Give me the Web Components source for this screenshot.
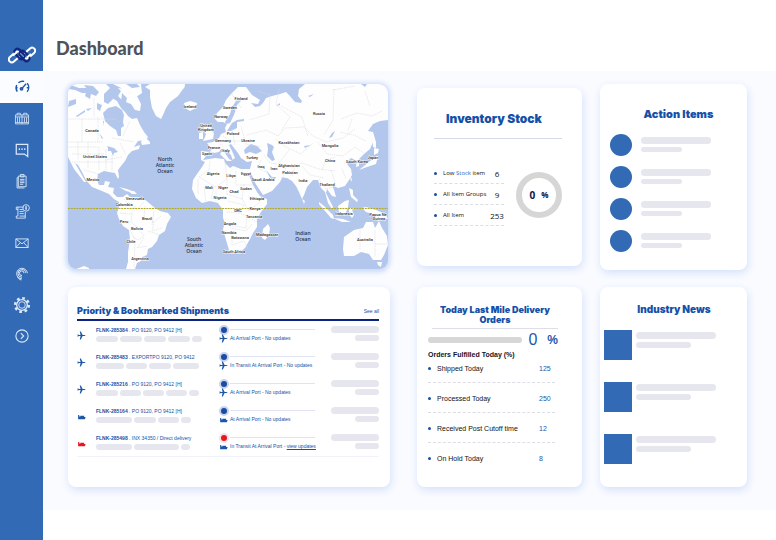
<!DOCTYPE html>
<html lang="en">
<head>
<meta charset="utf-8">
<title>Dashboard</title>
<style>
  body { margin: 0; font-family: "Liberation Sans", Arial, sans-serif; --blue: #1450a8; --brand: #326ab5; --soft: #e6e6ee; background: #fff; }
</style>
</head>
<body>
<dash-app></dash-app>
<script>
const define = (name, html) => {
  customElements.define(name, class extends HTMLElement {
    connectedCallback() {
      if (this.shadowRoot) return;
      const t = document.createElement('template');
      t.innerHTML = typeof html === 'function' ? html(this) : html;
      this.attachShadow({ mode: 'open' }).appendChild(t.content.cloneNode(true));
    }
  });
};

const icons = {
  gauge: '<path d="M5.2 16.6A8 8 0 0 1 4.5 8.6M6.6 5.8A8 8 0 0 1 13.6 4.2M17.4 6.4A8 8 0 0 1 17.2 16.8M10.2 13.6L16 7M3.6 12h2M16.8 12h2" /><circle cx="10.4" cy="13.2" r="1.5"/>',
  container: '<path d="M3 6h16v11H3zM3 8.500h16M3 15.500h16M5.500 9v6.500M8 9v6.500M11 6v11M14 9v6.500M16.500 9v6.500M5 6V4h4v2M13 6V4h4v2" stroke-width="1"/>',
  chat: '<path d="M4 4h14v15l-4-3H4z" stroke-width="1.500"/><path d="M7 10h1.500M10.300 10h1.500M13.600 10h1.500" stroke-width="2"/>',
  clipboard: '<path d="M6.500 5h9.500v13H6.500zM9 3h4.500v3H9zM8.500 9h5.500M8.500 11h5.500M8.500 13h5.500M8.500 15h4M6.500 7H5v12.500h9"/>',
  invoice: '<path d="M6 5h7M6 5v11H4v2.500h11V16H8M15 11v5M8 8h4M8 10.500h5M8 13h5M6 5H4v3h2"/><circle cx="16" cy="6" r="4"/><path d="M16 3.500v5M15 5h2M15 7h2"/>',
  mail: '<path d="M3.500 6h15v10.500h-15zM3.500 6l7.500 6 7.500-6M3.500 16.500l5.500-6M18.500 16.500L13 10.500"/>',
  finger: '<path d="M17.500 10A6.500 6.500 0 1 0 11 17M15.500 9.500A4.700 4.700 0 1 0 11 15M13.500 10A2.800 2.800 0 1 0 11 12.800M5.500 14.500Q7 17.500 10 18.500" stroke-width="1.200"/>',
  gear: '<circle cx="11" cy="11" r="6.500" stroke-width="1.600"/><circle cx="11" cy="11" r="4" stroke-width="1.100"/><circle cx="11" cy="11" r="8.400" stroke-width="3" stroke-dasharray="3.300 3.297"/>',
  next: '<circle cx="11" cy="11" r="7.500" stroke-width="1.300"/><path d="M9.600 7.600L13 11l-3.400 3.400" stroke-width="1.400"/>'
};

define('nav-item', el => `
<style>
  :host { display: block; height: 31px; color: #dce9fb; }
  :host([active]) { height: 32px; background: #fbfcff; color: #1f57a6; }
  a { display: grid; place-items: center; height: 100%; color: inherit; }
  svg { width: 18px; height: 18px; fill: none; stroke: currentColor; stroke-width: 1.100; }
  :host([active]) svg { stroke-width: 1.700; }
</style>
<a href="#${el.getAttribute('icon')}" aria-label="${el.getAttribute('icon')}"><svg viewBox="0 0 22 22">${icons[el.getAttribute('icon')]}</svg></a>`);

define('app-sidebar', `
<style>
  :host { display: block; background: var(--brand); }
  .logo { display: flex; align-items: flex-end; justify-content: center; height: 71px; box-sizing: border-box; padding-bottom: 7px; }
  .logo svg { width: 28px; height: 18px; fill: none; stroke-width: 2; }
  nav { margin-top: 0; }
</style>
<div class="logo"><svg viewBox="0 0 28 18" role="img" aria-label="Logo">
  <g stroke="#fff"><rect x="-6.500" y="-3" width="13" height="6" rx="3" transform="translate(6.500 11) rotate(-42)"/><rect x="-6.500" y="-3" width="13" height="6" rx="3" transform="translate(21.500 7) rotate(-42)"/></g>
  <g stroke="#11277f"><rect x="-6" y="-3" width="12" height="6" rx="3" transform="translate(11.500 8) rotate(48)"/><rect x="-6" y="-3" width="12" height="6" rx="3" transform="translate(16.500 10) rotate(48)"/></g>
  <path d="M5 9.500L9 6M19 11.500L23 8" stroke="#fff"/>
</svg></div>
<nav aria-label="Main">
  <nav-item icon="gauge" active></nav-item><nav-item icon="container"></nav-item><nav-item icon="chat"></nav-item>
  <nav-item icon="clipboard"></nav-item><nav-item icon="invoice"></nav-item><nav-item icon="mail"></nav-item>
  <nav-item icon="finger"></nav-item><nav-item icon="gear"></nav-item><nav-item icon="next"></nav-item>
</nav>`);

define('dash-card', `
<style>
  :host { display: block; box-sizing: border-box; background: #fff; border-radius: 8px; box-shadow: 1px 3px 8px #d3e0fb; min-width: 0; }
</style><slot></slot>`);

define('card-title', `
<style>
  :host { display: block; color: var(--blue); font-family: Inter, "Liberation Sans", sans-serif; }
  h2 { margin: 0; font-size: inherit; line-height: inherit; font-weight: 900; }
</style><h2><slot></slot></h2>`);

/* Map labels: text, centre x, baseline y */
const places = [
  ['Canada',92,132],['United States',95,158],['Mexico',93,181],['Venezuela',135,200],['Colombia',124,206],['Peru',124,223],['Brazil',147,220],['Bolivia',137,230],['Chile',131,243],['Argentina',140,260],
  ['Iceland',190,108],['Norway',221,118],['Sweden',230,109],['Finland',241,100],['United',206,127],['Kingdom',206,131],['Germany',223,142],['France',214,149],['Spain',207,155],['Italy',226,152],['Poland',233,135],['Ukraine',248,142],
  ['Russia',319,115],['Kazakhstan',289,144],['Mongolia',330,147],['China',330,162],['South Korea',357,163],['Japan',373,159],['Turkey',252,159],['Iraq',261,168],['Iran',274,170],['Afghanistan',289,167],['Pakistan',290,174],
  ['Algeria',213,175],['Libya',231,177],['Egypt',246,175],['Saudi Arabia',263,181],['Mali',209,189],['Niger',223,189],['Chad',234,193],['Sudan',246,190],['Nigeria',220,199],['Ethiopia',257,200],['Kenya',255,210],['DRC',238,212],['Tanzania',254,218],['Angola',230,225],['Namibia',229,234],['Botswana',240,239],['South Africa',234,253],['Madagascar',267,236],
  ['India',303,182],['Thailand',327,186],['Indonesia',344,215],['Papua Ne',378,216],['Guinea',379,220],['Australia',365,241]
];
const oceans = [['North',165,161],['Atlantic',165,167],['Ocean',165,173],['South',194,241],['Atlantic',194,247],['Ocean',194,253],['Indian',303,235],['Ocean',303,241]];

define('world-map', `
<style>
  :host { display: block; border-radius: 9px; overflow: hidden; background: #b3c7ed; box-shadow: 0 1px 5px 2px #c8d9f8; }
  svg { display: block; width: 100%; height: 100%; }
  .land { fill: #fefefe; } .sea { fill: #b3c7ed; }
  .edge { fill: none; stroke: #dadbe2; stroke-width: .6; stroke-dasharray: 1.500 .7; }
  text { font-family: Roboto, sans-serif; font-size: 4px; font-weight: 500; text-anchor: middle; fill: #2c2c2c; paint-order: stroke; stroke: #fff; stroke-width: .8px; }
  .o text { font-family: "Open Sans", sans-serif; font-size: 5px; font-weight: 600; fill: #27334c; stroke: none; }
</style>
<svg viewBox="68 84 320 185" preserveAspectRatio="xMidYMid slice" role="img" aria-label="World map">
<g class="land">
  <path d="M68 84H106L110 88 104 94 107 101 112 98 117 101 121 108 125 112 128 116 132 119 137 118 140 125 144 132 148 137 146 140 138 141 134 147 140 145 139 149 132 151 128 155 125 161 121 166 118 170 119 177 118 179 115 173 109 172 104 171 98 174 97 180 99 185 104 185 105 181 110 182 108 187 114 188 113 193 117 197 123 197 127 194 130 197 143 198 149 203 155 208 160 211 168 213 171 217 167 224 165 231 159 235 157 241 152 247 148 249 147 255 142 257 141 261 137 263 135 269H126L128 262 128 252 130 240 129 230 123 226 119 219 117 213 119 207 119 202 114 199 109 194 102 191 92 187 86 180 82 172 78 165 75 163 79 170 83 177 86 182 84 182 78 174 74 169 71 163 68 157Z"/>
  <path d="M118 88l7 1 5 4 7 3 4 8-1 7-5-1-4-6-8-3-5-5 3-5zM113 84l13 0 6 4 8-1-3-3h4l1 9-6 4-7-5-8-4zM144 136l6 6 0 2-8 1-1-3zM150 84h35q0 4-2 5l-5 7-8 6-4 6-3 7-2 4-5-3-4-8-2-11 0-7-5-3zM184 103l6-2 7 2-1 5-6 3-5-3z"/>
  <path d="M205 125l6 1 0 5 3 2-1 6-10 2 2-4 1-3-3-4zM199 133l4-1v7l-4 0z"/>
  <path d="M388 84H305L299 89 298 96 302 101 301 103 295 102 289 95 286 92 280 94 272 96 266 98 263 103 260 106 255 107 251 103 258 104 260 100 252 95 246 87 238 87 231 94 226 100 223 107 217 113 215 119 218 122 223 122 227 124 225 128 226 132 221 134 219 138 213 142 207 143 212 149 210 152 201 151 201 160 205 162 202 167 197 174 193 180 192 189 196 198 202 203 210 201 218 203 223 210 223 218 225 223 223 229 226 240 229 250 231 253 240 252 245 248 250 239 253 233 257 227 257 219 261 212 267 204 267 199 261 197 257 192 252 182 249 175 253 180 259 189 263 195 272 191 280 182 282 178 273 174 270 172 278 177 287 178 292 181 296 186 299 192 302 199 304 195 307 187 313 180 318 180 321 188 325 192 328 203 332 209 333 207 329 199 326 193 327 189 332 196 336 197 334 190 332 185 338 188 345 186 349 180 352 175 351 169 347 164 349 160 351 158 357 161 356 167 359 166 359 159 364 154 370 149 373 142 373 132 368 131 373 124 380 121 388 120Z"/>
  <path d="M373 132l3 10 0 6-3-1-1-10zM374 148l5 1-1 4-4 2zM375 157l3-1-2 8-9 3-8 3 5-4zM350 176l2 3-1 3zM349 188l4 2 0 5 5 5-1 2-6-5zM302 199l3 2-1 3zM268 224l2 4-1 7-4 5-3-2 1-9zM319 202l5 4 9 9 1 4-3-1-6-7-6-7zM333 218l10 1 8 3-9 0zM338 206l7-5 4-1-1 7-3 8-6-2zM349 208h6l-3 2 2 5-2 3-3-4zM362 208l4-1 10 3 9 4 3 5-7-1-5 1-4-5-6-2zM119 187l8 2 8 3-1 1-8-2zM128 191l6 0 3 3-5 0z"/>
  <path d="M344 237l10-7 9-2 3-6 7 0 2 6 4-7 3 7 5 8 1 9-4 10-3 5-8 0-4-6-8-2-7 4-10 0-1-7zM377 262l5 0-1 5-3-2zM76 269l3-1 5-2 5 2v1z"/>
</g>
<g class="sea">
  <path d="M103 113l5-5 8-2 6 4 2 5-1 7 1 4-3 2 0 8-3 0-2-6-6-4-5-5zM104 126l-1-5 1 0zM68 84l11 4 9 0 2 5-8 0-7-3-7-1zM84 85l9 1 6 6-3 4-5-2-1 5-5-3 2-7zM69 101l7-2 0 5-8 3zM76 116l9-6 0 2-8 5zM86 109l6-1-4 3zM104 94l7-2 2 7-5 5-4-2zM97 103l5 2-2 6-3-2zM122 93l5 5-2 8-4-3zM107 146l7 2 4 4-4 1-1 3-2-5-3 0 0-3zM99 133l4 5-1 1z"/>
  <path d="M209 152l5 1 5-1 2-3 4 0 6 6 2 6-4-2-6-9-3 4 7 7 4 0 4-3-3-7-3-6 2-1 7 9 3 5 6 4 5-1-2 8-9 0-8-3-3 2-5-5-1-4-9-1-12 2zM247 147l4-3 6 2 5 5-6 3-6-2-5 2-1-4zM267 143l5 2 2 2-2 5 3 8-3 1-5-5 1-7zM241 101l-4 4-3 10-4 8-4 1-1-2 5-8 2-7 6-9zM232 123l5-3 7-1 0 2-7 1 0 6-6 3-4 0zM249 174l3 1 3 8 7 12-2 1-7-11zM266 170l6 7 4 0-1 2-5-1zM335 131l-3 6-3 1 3-5zM294 89l4 5-1 6-4-7zM308 96l6-2-4 3zM361 84h6l-2 3zM276 106l4-3 0 2zM304 146l7-1-6 3zM350 92l4 2z"/>
</g>
<g class="edge">
  <path d="M68 119H116M68 142H103M82 119V142M98 117V142M68 147H99V170M78 142v18M88 142v26M72 154h32M72 162h41M106 149v22M112 155v16M94 98v20M112 138l22 4M120 143l6 12M105 160l17-3M130 121l-7 15M84 170l15 4"/>
  <path d="M128 202l8 8 8-8M120 213l11 1 5-8M132 214l-1 8 8 7 5 7-6 4-5-3M145 206l-1 11 10 5-2 9 10-3M154 211l-2 14M130 230l5 9-1 29M144 238l-7 10 10-2M148 231l12 4M161 216l-9 7M124 199l5 6"/>
  <path d="M210 161l-1 9-10 7 17 10 11-8-2-18M227 175v20M214 187l-3 12M198 179v15M236 171v14h17M227 194l15 5 2-15M242 199l7 12 11-9M228 201l16 4-4 8-14-1M239 213l8 3-1 12-18-3M230 228l16 3 6-7M232 233v12l12-4 4 8M248 217l9 5M204 187l2 15M216 191v11"/>
  <path d="M208 152l7 1M216 139l7 8M223 136l7 5 12 0M232 129l3 16M241 126l5 18 15 3M247 135l19-5 12 6 7-8 19-1 9 9 13 6 17-4 12-9M275 139l9 7 17 8 12-11M289 150l-10 13 13 5 10-5 17 6 16 2M264 155l6 8 9 1M261 160l-3 8 10 5M286 166l-3 12M295 166l-3 10M302 166l8 9 14 3M319 179l7 10 7-2M331 170l5 16M318 142l9 12 16 2 12-9 9 6M340 132l14 3 12 6M279 89l-3 15 14 13-9 14M281 106l21 11 6 19M334 89l-1 31-9 15M333 90l22-4M341 119l16-6 15 3 10-5M352 119l-4 12M365 91l5 15M258 91l12 4-1 19-20 6M232 94l9 14M322 170l3-9 10-4M342 169l4 10M360 228v22M375 230v26M375 244h13"/>
</g>
<path d="M68 208.500H388" stroke="#b5aa28" stroke-width="1" stroke-dasharray="2 .8"/>
<g>${places.map(p => `<text x="${p[1]}" y="${p[2]}">${p[0]}</text>`).join('')}</g>
<g class="o">${oceans.map(p => `<text x="${p[1]}" y="${p[2]}">${p[0]}</text>`).join('')}</g>
</svg>`);

const plane = '<path d="M0 4.800L1.100 4.600 2 5.200 4.300 5.200 3.200 .8 4.600 .8 7 5.200 9 5.200Q10.800 5.300 10.800 6 10.800 6.700 9 6.800L7 6.800 4.600 11.200 3.200 11.200 4.300 6.800 2 6.800 1.100 7.400 0 7.200 .5 6Z"/>';
const ship = '<path d="M1 4h1.500v2H4V5h5v1.500h2L10 9.500H1Z"/>';
define('transport-icon', el => `
<style>:host { display: block; width: 9px; height: 9px; color: #1d57ab; } :host([alert]) { color: #e01b20; } svg { display: block; width: 9px; height: 9px; fill: currentColor; }</style>
<svg viewBox="0 0 11 12" aria-hidden="true">${el.getAttribute('kind') === 'ship' ? ship : plane}</svg>`);

define('shipment-row', el => {
  const a = n => el.getAttribute(n), alert = el.hasAttribute('alert') ? 'alert' : '';
  return `
<style>
  :host { display: grid; grid-template-columns: 19px minmax(0, 123fr) minmax(0, 112fr) 48px; height: 27px; font-size: 5px; line-height: 6px; color: var(--blue); }
  .kind { padding-top: 6px; }
  .bars { display: flex; gap: 2px; margin-top: 3px; }
  i { display: block; height: 6px; border-radius: 3px; background: var(--soft); }
  .info { padding-top: 2px; }
  .end { display: grid; justify-items: end; align-content: start; gap: 2px; padding-top: 1px; }
  .end i:first-child { width: 48px; height: 7px; border-radius: 4px; } .end i:last-child { width: 24px; }
  .track { display: flex; align-items: center; height: 9px; margin-right: 16px; }
  .track::after { content: ""; flex: 1; height: 1px; background: #dfe3f3; }
  .dot { width: 6px; height: 6px; border-radius: 50%; background: #184da4; border: 2px solid #ccd4eb; margin-right: 1px; }
  .dot.alert { background: #e3191f; border-color: #f7dfe5; }
  .status { display: flex; align-items: center; gap: 2px; height: 8px; white-space: nowrap; }
  ::slotted(a) { color: inherit; }
</style>
<div class="kind"><transport-icon kind="${a('kind')}" ${alert}></transport-icon></div>
<div class="info"><b>${a('code')}</b> . ${a('orders')}<div class="bars">${a('bars').split(' ').map(w => `<i style="width:${w}px"></i>`).join('')}</div></div>
<div><div class="track"><span class="dot ${alert}"></span></div><div class="status"><transport-icon kind="${a('kind')}"></transport-icon><span><slot></slot></span></div></div>
<div class="end"><i></i><i></i></div>`;
});

define('shipment-list', `
<style>
  :host { display: block; padding: 18px 11px 0 9px; }
  header { display: flex; justify-content: space-between; align-items: center; border-bottom: 2px solid #0c2280; padding-bottom: 2px; }
  card-title { font-size: 9px; line-height: 12px; }
  header a { font-size: 5px; color: var(--blue); text-decoration: none; }
  .rows { padding: 4px 0 0; }
  hr { margin: -4px 0 24px; border: 0; border-top: 1px solid #f0f3fb; }
  .rows a { color: inherit; text-underline-offset: 1px; }
</style>
<header><card-title>Priority &amp; Bookmarked Shipments</card-title><a href="#shipments">See all</a></header>
<div class="rows">
<shipment-row kind="plane" code="FLNK-285384" orders="PO 9120, PO 9412 [H]" bars="22 22 22 22 10">At Arrival Port - No updates</shipment-row>
<shipment-row kind="plane" code="FLNK-285483" orders="EXPORTPO 9120, PO 9412" bars="28 21 22 26">In Transit At Arrival Port - No updates</shipment-row>
<shipment-row kind="plane" code="FLNK-285216" orders=" PO 9120, PO 9412 [H]" bars="22 21 21 21 10">At Arrival Port - No updates</shipment-row>
<shipment-row kind="ship" code="FLNK-285164" orders=" PO 9120, PO 9412 [H]" bars="36 22 21 10">At Arrival Port - No updates</shipment-row>
<shipment-row kind="ship" alert code="FLNK-285498" orders="INX 34350 / Direct delivery" bars="36 45 9">In Transit At Arrival Port - <a href="#updates">view updates</a></shipment-row>
</div><hr>`);

define('stat-row', `
<style>
  :host { display: flex; align-items: center; border-bottom: 1px dashed #dcdde4; color: #111; }
  :host([last]) { border-bottom-color: transparent; }
  :host::before { content: ""; width: 3px; height: 3px; border-radius: 50%; background: #1c4da3; margin-right: 6px; }
  .l { flex: 1; white-space: nowrap; } .v { width: var(--vw); text-align: var(--va, left); font-size: var(--vs, inherit); color: var(--vc, inherit); }
  ::slotted(em) { font-style: normal; color: #2b69c4; }
</style><span class="l"><slot></slot></span><span class="v"><slot name="value"></slot></span>`);

define('ring-gauge', `
<style>
  :host { display: grid; place-items: center; width: 34px; height: 34px; border: 6px solid #d6d7d5; border-radius: 50%; font: 700 10px/12px "Open Sans", sans-serif; color: #0b1445; }
  span { display: flex; gap: 6px; align-items: center; } small { font-size: 8px; }
</style><span>0 <small>%</small></span>`);

define('inventory-stock', `
<style>
  :host { display: block; padding: 22px 20px 40px 17px; }
  card-title { font-size: 12px; line-height: 18px; text-align: center; padding: 0 8px 10px 0; border-bottom: 1px solid #d7dcec; }
  .body { display: flex; justify-content: space-between; align-items: center; padding-top: 24px; }
  .stats { width: 70px; font-family: "Open Sans", sans-serif; font-size: 6px; --vs: 8px; --vw: 14px; --va: center; }
  stat-row { height: 20px; }
</style>
<card-title>Inventory Stock</card-title>
<div class="body"><div class="stats">
<stat-row>Low <em>Stock</em> item<span slot="value">6</span></stat-row>
<stat-row>All Item Groups<span slot="value">9</span></stat-row>
<stat-row>All Item<span slot="value">253</span></stat-row></div>
<ring-gauge></ring-gauge></div>`);

define('delivery-orders', `
<style>
  :host { display: block; padding: 18px 24px 14px 11px; }
  card-title { font-size: 9px; line-height: 10px; text-align: center; margin-left: 4px; padding-bottom: 3px; border-bottom: 1px solid #dcdfea; }
  .p { display: flex; align-items: center; height: 22px; color: #1d57ab; }
  .p div { flex: 1; height: 6px; border-radius: 3px; background: #d7d8d5; margin-right: 6px; }
  .p span { font-size: 16px; } .p b { font-size: 12px; margin-left: 10px; }
  h3 { margin: 0; font-size: 7px; line-height: 8px; color: #10142e; }
  .stats { font-size: 7px; line-height: 8px; padding: 0 3px 0 0; --vw: 16px; --vc: #1d57ab; }
  stat-row { box-sizing: border-box; height: 30px; padding-top: 2px; }
  stat-row:first-child { height: 24px; padding: 0 0 4px; }
</style>
<card-title>Today Last Mile Delivery Orders</card-title>
<div class="p"><div role="progressbar" aria-label="Orders fulfilled" aria-valuenow="0"></div><span>0</span><b>%</b></div>
<h3>Orders Fulfilled Today (%)</h3>
<div class="stats">
<stat-row>Shipped Today<span slot="value">125</span></stat-row>
<stat-row>Processed Today<span slot="value">250</span></stat-row>
<stat-row>Received Post Cutoff time<span slot="value">12</span></stat-row>
<stat-row last>On Hold Today<span slot="value">8</span></stat-row></div>`);

define('media-row', `
<style>
  :host { display: flex; align-items: flex-start; }
  .m { flex: none; width: 22px; height: 22px; border-radius: 50%; background: var(--brand); margin-right: 9px; }
  .t { flex: 1; padding-top: 3px; }
  i { display: block; height: 7px; border-radius: 4px; background: var(--soft); } i + i { width: 58%; height: 5px; margin-top: 3px; }
  :host([square]) .m { width: 28px; height: 30px; border-radius: 0; margin-right: 4px; }
  :host([square]) .t { padding-top: 2px; } :host([square]) i + i { width: 69%; height: 6px; }
</style><span class="m"></span><div class="t"><i></i><i></i></div>`);

define('action-items', `
<style>
  :host { display: block; padding: 22px 36px 18px 10px; }
  card-title { font-size: 11px; line-height: 16px; text-align: center; margin: 0 -20px 12px 16px; }
  .list { display: grid; gap: 10px; }
</style>
<card-title>Action Items</card-title><div class="list"><media-row></media-row><media-row></media-row><media-row></media-row><media-row></media-row></div>`);

define('industry-news', `
<style>
  :host { display: block; padding: 14px 31px 22px 4px; }
  card-title { font-size: 10px; line-height: 16px; text-align: center; margin: 0 -28px 13px 0; }
  .list { display: grid; gap: 22px; }
</style>
<card-title>Industry News</card-title><div class="list"><media-row square></media-row><media-row square></media-row><media-row square></media-row></div>`);

define('dash-app', `
<style>
  :host { display: grid; grid-template-columns: 43px minmax(0, 1fr); min-height: 100vh; }
  h1 { margin: 0; padding: 36px 13px 11px; font: 900 18px/24px Lato, sans-serif; color: #505257; }
  .grid { display: grid; grid-template-columns: minmax(0, 331fr) minmax(0, 165fr) minmax(0, 147fr); column-gap: 18px; row-gap: 17px; padding: 13px 29px 23px 25px; background: #fafbff; }
  world-map { margin-right: 11px; aspect-ratio: 320 / 185; align-self: start; }
  .ship { margin-right: 9px; }
  .inv { align-self: center; }
</style>
<app-sidebar></app-sidebar>
<main><h1>Dashboard</h1><div class="grid">
<world-map></world-map>
<dash-card class="inv"><inventory-stock></inventory-stock></dash-card>
<dash-card><action-items></action-items></dash-card>
<dash-card class="ship"><shipment-list></shipment-list></dash-card>
<dash-card><delivery-orders></delivery-orders></dash-card>
<dash-card><industry-news></industry-news></dash-card>
</div></main>`);
</script>
</body>
</html>
